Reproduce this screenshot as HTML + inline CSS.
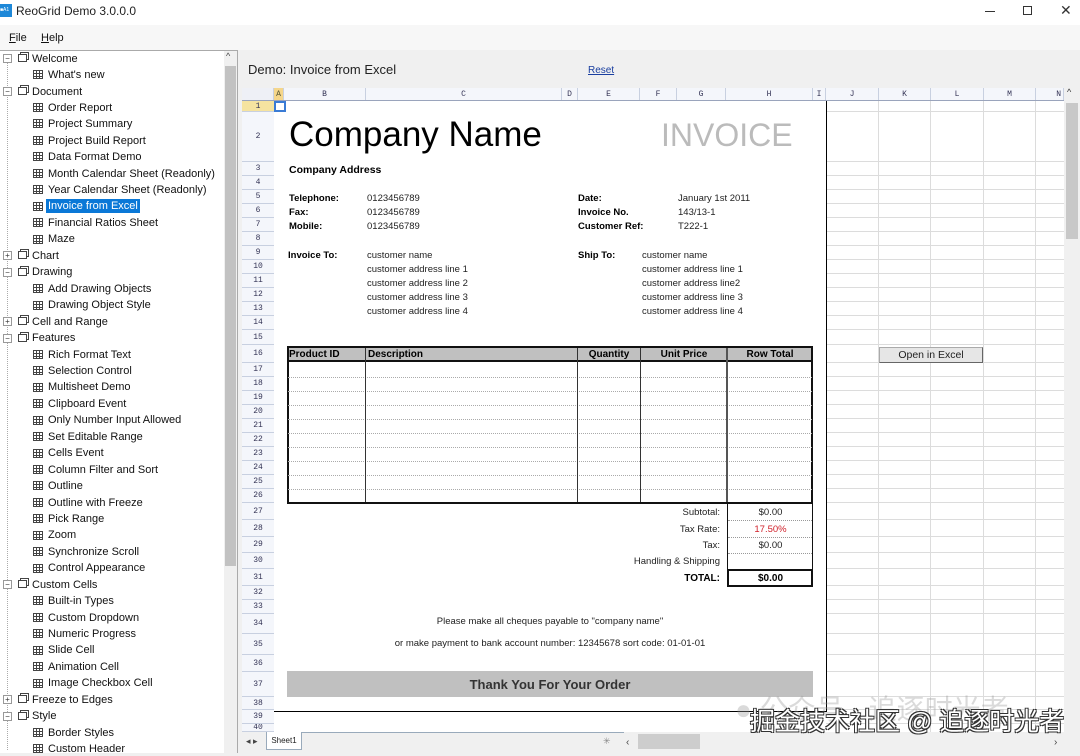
<!DOCTYPE html>
<html><head><meta charset="utf-8">
<style>
*{margin:0;padding:0;box-sizing:border-box}
body{width:1080px;height:753px;overflow:hidden;background:#f0f0f0;font-family:"Liberation Sans","Noto Sans CJK SC",sans-serif;position:relative}
.a{position:absolute;white-space:nowrap}
.tree .a{font-size:11px;color:#111;line-height:14px}
.gi{position:absolute;width:10px;height:9px;border:1px solid #444;background:
linear-gradient(#444,#444) 0 2px/100% 1px no-repeat,
linear-gradient(#444,#444) 0 5px/100% 1px no-repeat,
linear-gradient(#444,#444) 2px 0/1px 100% no-repeat,
linear-gradient(#444,#444) 5px 0/1px 100% no-repeat,#fff}
.fi{position:absolute;width:9px;height:8px;border:1px solid #444;background:#fff;box-shadow:2px -2px 0 -1px #fff,2px -2px 0 0 #444}
.ex{position:absolute;width:9px;height:9px;border:1px solid #999;background:#fff;font-size:8px;line-height:7px;text-align:center;color:#333}
.rh{position:absolute;left:242px;width:32px;font-size:8px;color:#335;text-align:center;border-bottom:1px solid #c8d0e0;background:#f4f6fb;font-family:"Liberation Mono",monospace}
.ch{position:absolute;top:88px;height:13px;font-size:8px;color:#335;text-align:center;line-height:13px;border-right:1px solid #c8d0e0;background:#f4f6fb;font-family:"Liberation Mono",monospace}
.hl{position:absolute;left:826px;width:238px;height:1px;background:#dcdcdc}
.vl{position:absolute;top:101px;height:631px;width:1px;background:#dcdcdc}
.t{position:absolute;font-size:9.5px;color:#222;white-space:nowrap;line-height:12px}
.b{font-weight:bold;color:#000}
.dl{position:absolute;left:288px;width:524px;height:0;border-top:1px dotted #aaa}
</style></head><body>
<div class="a" style="left:0;top:0;width:1080px;height:25px;background:#fff"></div>
<div class="a" style="left:0;top:4px;width:12px;height:13px;background:#1e88d8;color:#fff;font-size:5px;line-height:13px">■A1</div>
<div class="a" style="left:16px;top:4px;font-size:12px;color:#222">ReoGrid Demo 3.0.0.0</div>
<div class="a" style="left:985px;top:11px;width:10px;height:1px;background:#333"></div>
<div class="a" style="left:1023px;top:6px;width:9px;height:9px;border:1px solid #333"></div>
<div class="a" style="left:1060px;top:2px;font-size:14px;color:#333">✕</div>
<div class="a" style="left:0;top:25px;width:1080px;height:25px;background:#f7f7f7"></div>
<div class="a" style="left:9px;top:32px;font-size:11px;color:#111"><u>F</u>ile</div>
<div class="a" style="left:41px;top:32px;font-size:11px;color:#111"><u>H</u>elp</div>
<div class="a" style="left:0;top:50px;width:238px;height:703px;background:#fff;border-top:1px solid #aaa;border-right:1px solid #aaa"></div>
<div class="a" style="left:224px;top:51px;width:13px;height:702px;background:#f0f0f0"></div>
<div class="a" style="left:225px;top:66px;width:11px;height:500px;background:#c2c2c2"></div>
<div class="a" style="left:226px;top:51px;font-size:9px;color:#444">^</div>
<div class="a" style="left:7px;top:60px;width:0;height:690px;border-left:1px dotted #aaa"></div>
<div class="tree">
<div class="ex" style="left:3px;top:54px">−</div><div class="fi" style="left:18px;top:54px"></div><div class="a" style="left:32px;top:52px">Welcome</div>
<div class="gi" style="left:33px;top:70px"></div><div class="a" style="left:48px;top:68px">What's new</div>
<div class="ex" style="left:3px;top:87px">−</div><div class="fi" style="left:18px;top:87px"></div><div class="a" style="left:32px;top:85px">Document</div>
<div class="gi" style="left:33px;top:103px"></div><div class="a" style="left:48px;top:101px">Order Report</div>
<div class="gi" style="left:33px;top:119px"></div><div class="a" style="left:48px;top:117px">Project Summary</div>
<div class="gi" style="left:33px;top:136px"></div><div class="a" style="left:48px;top:134px">Project Build Report</div>
<div class="gi" style="left:33px;top:152px"></div><div class="a" style="left:48px;top:150px">Data Format Demo</div>
<div class="gi" style="left:33px;top:169px"></div><div class="a" style="left:48px;top:167px">Month Calendar Sheet (Readonly)</div>
<div class="gi" style="left:33px;top:185px"></div><div class="a" style="left:48px;top:183px">Year Calendar Sheet (Readonly)</div>
<div class="gi" style="left:33px;top:202px"></div><div class="a" style="left:46px;top:199px;background:#0a78d7;color:#fff;padding:0 2px">Invoice from Excel</div>
<div class="gi" style="left:33px;top:218px"></div><div class="a" style="left:48px;top:216px">Financial Ratios Sheet</div>
<div class="gi" style="left:33px;top:235px"></div><div class="a" style="left:48px;top:232px">Maze</div>
<div class="ex" style="left:3px;top:251px">+</div><div class="fi" style="left:18px;top:251px"></div><div class="a" style="left:32px;top:249px">Chart</div>
<div class="ex" style="left:3px;top:268px">−</div><div class="fi" style="left:18px;top:268px"></div><div class="a" style="left:32px;top:265px">Drawing</div>
<div class="gi" style="left:33px;top:284px"></div><div class="a" style="left:48px;top:282px">Add Drawing Objects</div>
<div class="gi" style="left:33px;top:301px"></div><div class="a" style="left:48px;top:298px">Drawing Object Style</div>
<div class="ex" style="left:3px;top:317px">+</div><div class="fi" style="left:18px;top:317px"></div><div class="a" style="left:32px;top:315px">Cell and Range</div>
<div class="ex" style="left:3px;top:334px">−</div><div class="fi" style="left:18px;top:334px"></div><div class="a" style="left:32px;top:331px">Features</div>
<div class="gi" style="left:33px;top:350px"></div><div class="a" style="left:48px;top:348px">Rich Format Text</div>
<div class="gi" style="left:33px;top:366px"></div><div class="a" style="left:48px;top:364px">Selection Control</div>
<div class="gi" style="left:33px;top:383px"></div><div class="a" style="left:48px;top:380px">Multisheet Demo</div>
<div class="gi" style="left:33px;top:399px"></div><div class="a" style="left:48px;top:397px">Clipboard Event</div>
<div class="gi" style="left:33px;top:416px"></div><div class="a" style="left:48px;top:413px">Only Number Input Allowed</div>
<div class="gi" style="left:33px;top:432px"></div><div class="a" style="left:48px;top:430px">Set Editable Range</div>
<div class="gi" style="left:33px;top:449px"></div><div class="a" style="left:48px;top:446px">Cells Event</div>
<div class="gi" style="left:33px;top:465px"></div><div class="a" style="left:48px;top:463px">Column Filter and Sort</div>
<div class="gi" style="left:33px;top:481px"></div><div class="a" style="left:48px;top:479px">Outline</div>
<div class="gi" style="left:33px;top:498px"></div><div class="a" style="left:48px;top:496px">Outline with Freeze</div>
<div class="gi" style="left:33px;top:514px"></div><div class="a" style="left:48px;top:512px">Pick Range</div>
<div class="gi" style="left:33px;top:531px"></div><div class="a" style="left:48px;top:528px">Zoom</div>
<div class="gi" style="left:33px;top:547px"></div><div class="a" style="left:48px;top:545px">Synchronize Scroll</div>
<div class="gi" style="left:33px;top:564px"></div><div class="a" style="left:48px;top:561px">Control Appearance</div>
<div class="ex" style="left:3px;top:580px">−</div><div class="fi" style="left:18px;top:580px"></div><div class="a" style="left:32px;top:578px">Custom Cells</div>
<div class="gi" style="left:33px;top:596px"></div><div class="a" style="left:48px;top:594px">Built-in Types</div>
<div class="gi" style="left:33px;top:613px"></div><div class="a" style="left:48px;top:611px">Custom Dropdown</div>
<div class="gi" style="left:33px;top:629px"></div><div class="a" style="left:48px;top:627px">Numeric Progress</div>
<div class="gi" style="left:33px;top:646px"></div><div class="a" style="left:48px;top:643px">Slide Cell</div>
<div class="gi" style="left:33px;top:662px"></div><div class="a" style="left:48px;top:660px">Animation Cell</div>
<div class="gi" style="left:33px;top:679px"></div><div class="a" style="left:48px;top:676px">Image Checkbox Cell</div>
<div class="ex" style="left:3px;top:695px">+</div><div class="fi" style="left:18px;top:695px"></div><div class="a" style="left:32px;top:693px">Freeze to Edges</div>
<div class="ex" style="left:3px;top:712px">−</div><div class="fi" style="left:18px;top:712px"></div><div class="a" style="left:32px;top:709px">Style</div>
<div class="gi" style="left:33px;top:728px"></div><div class="a" style="left:48px;top:726px">Border Styles</div>
<div class="gi" style="left:33px;top:744px"></div><div class="a" style="left:48px;top:742px">Custom Header</div>
</div>
<div class="a" style="left:248px;top:62px;font-size:13px;color:#222">Demo: Invoice from Excel</div>
<div class="a" style="left:588px;top:65px;font-size:10px;color:#1a3fa0;text-decoration:underline">Reset</div>
<div class="a" style="left:242px;top:88px;width:822px;height:644px;background:#fff"></div>
<div class="a" style="left:242px;top:88px;width:32px;height:13px;background:#eef0f6;border-right:1px solid #c8d0e0"></div>
<div class="ch" style="left:274px;width:10px;background:#f5d68a;color:#553">A</div>
<div class="ch" style="left:284px;width:82px">B</div>
<div class="ch" style="left:366px;width:196px">C</div>
<div class="ch" style="left:562px;width:16px">D</div>
<div class="ch" style="left:578px;width:62px">E</div>
<div class="ch" style="left:640px;width:37px">F</div>
<div class="ch" style="left:677px;width:49px">G</div>
<div class="ch" style="left:726px;width:87px">H</div>
<div class="ch" style="left:813px;width:13px">I</div>
<div class="ch" style="left:826px;width:53px">J</div>
<div class="ch" style="left:879px;width:52px">K</div>
<div class="ch" style="left:931px;width:53px">L</div>
<div class="ch" style="left:984px;width:52px">M</div>
<div class="ch" style="left:1036px;width:28px;text-align:right;padding-right:2px">N</div>
<div class="a" style="left:242px;top:100px;width:822px;height:1px;background:#9aa4bc"></div>
<div class="a" style="left:273px;top:101px;width:1px;height:631px;background:#9aa4bc"></div>
<div class="rh" style="top:101px;height:11px;line-height:11px;background:#f5e3a0">1</div>
<div class="rh" style="top:112px;height:50px;line-height:50px">2</div>
<div class="rh" style="top:162px;height:14px;line-height:14px">3</div>
<div class="rh" style="top:176px;height:14px;line-height:14px">4</div>
<div class="rh" style="top:190px;height:14px;line-height:14px">5</div>
<div class="rh" style="top:204px;height:14px;line-height:14px">6</div>
<div class="rh" style="top:218px;height:14px;line-height:14px">7</div>
<div class="rh" style="top:232px;height:14px;line-height:14px">8</div>
<div class="rh" style="top:246px;height:14px;line-height:14px">9</div>
<div class="rh" style="top:260px;height:14px;line-height:14px">10</div>
<div class="rh" style="top:274px;height:14px;line-height:14px">11</div>
<div class="rh" style="top:288px;height:14px;line-height:14px">12</div>
<div class="rh" style="top:302px;height:14px;line-height:14px">13</div>
<div class="rh" style="top:316px;height:14px;line-height:14px">14</div>
<div class="rh" style="top:330px;height:15px;line-height:15px">15</div>
<div class="rh" style="top:345px;height:18px;line-height:18px">16</div>
<div class="rh" style="top:363px;height:14px;line-height:14px">17</div>
<div class="rh" style="top:377px;height:14px;line-height:14px">18</div>
<div class="rh" style="top:391px;height:14px;line-height:14px">19</div>
<div class="rh" style="top:405px;height:14px;line-height:14px">20</div>
<div class="rh" style="top:419px;height:14px;line-height:14px">21</div>
<div class="rh" style="top:433px;height:14px;line-height:14px">22</div>
<div class="rh" style="top:447px;height:14px;line-height:14px">23</div>
<div class="rh" style="top:461px;height:14px;line-height:14px">24</div>
<div class="rh" style="top:475px;height:14px;line-height:14px">25</div>
<div class="rh" style="top:489px;height:14px;line-height:14px">26</div>
<div class="rh" style="top:503px;height:17px;line-height:17px">27</div>
<div class="rh" style="top:520px;height:17px;line-height:17px">28</div>
<div class="rh" style="top:537px;height:16px;line-height:16px">29</div>
<div class="rh" style="top:553px;height:16px;line-height:16px">30</div>
<div class="rh" style="top:569px;height:17px;line-height:17px">31</div>
<div class="rh" style="top:586px;height:14px;line-height:14px">32</div>
<div class="rh" style="top:600px;height:14px;line-height:14px">33</div>
<div class="rh" style="top:614px;height:20px;line-height:20px">34</div>
<div class="rh" style="top:634px;height:21px;line-height:21px">35</div>
<div class="rh" style="top:655px;height:17px;line-height:17px">36</div>
<div class="rh" style="top:672px;height:25px;line-height:25px">37</div>
<div class="rh" style="top:697px;height:13px;line-height:13px">38</div>
<div class="rh" style="top:710px;height:14px;line-height:14px">39</div>
<div class="rh" style="top:724px;height:8px;line-height:8px;overflow:hidden">40</div>
<div class="vl" style="left:878px"></div><div class="vl" style="left:930px"></div><div class="vl" style="left:983px"></div><div class="vl" style="left:1035px"></div>
<div class="hl" style="top:111px"></div><div class="hl" style="top:161px"></div><div class="hl" style="top:175px"></div><div class="hl" style="top:189px"></div><div class="hl" style="top:203px"></div><div class="hl" style="top:217px"></div><div class="hl" style="top:231px"></div><div class="hl" style="top:245px"></div><div class="hl" style="top:259px"></div><div class="hl" style="top:273px"></div><div class="hl" style="top:287px"></div><div class="hl" style="top:301px"></div><div class="hl" style="top:315px"></div><div class="hl" style="top:329px"></div><div class="hl" style="top:344px"></div><div class="hl" style="top:362px"></div><div class="hl" style="top:376px"></div><div class="hl" style="top:390px"></div><div class="hl" style="top:404px"></div><div class="hl" style="top:418px"></div><div class="hl" style="top:432px"></div><div class="hl" style="top:446px"></div><div class="hl" style="top:460px"></div><div class="hl" style="top:474px"></div><div class="hl" style="top:488px"></div><div class="hl" style="top:502px"></div><div class="hl" style="top:519px"></div><div class="hl" style="top:536px"></div><div class="hl" style="top:552px"></div><div class="hl" style="top:568px"></div><div class="hl" style="top:585px"></div><div class="hl" style="top:599px"></div><div class="hl" style="top:613px"></div><div class="hl" style="top:633px"></div><div class="hl" style="top:654px"></div><div class="hl" style="top:671px"></div><div class="hl" style="top:696px"></div><div class="hl" style="top:709px"></div><div class="hl" style="top:723px"></div>
<div class="a" style="left:1064px;top:88px;width:16px;height:644px;background:#f0f0f0"></div>
<div class="a" style="left:1066px;top:103px;width:12px;height:136px;background:#c8c8c8"></div>
<div class="a" style="left:1067px;top:87px;font-size:9px;color:#333">^</div>
<div class="a" style="left:274px;top:101px;width:553px;height:611px;border:1px solid #000;border-top:none;border-left:none"></div>
<div class="a" style="left:274px;top:101px;width:12px;height:11px;border:2px solid #3a7bd5"></div>
<div class="a" style="left:289px;top:115px;font-size:35px;color:#000">Company Name</div>
<div class="a" style="left:661px;top:117px;font-size:32px;color:#bbb">INVOICE</div>
<div class="t b" style="left:289px;top:164px;font-size:10.5px">Company Address</div>
<div class="t b" style="left:289px;top:193px">Telephone:</div><div class="t" style="left:367px;top:193px">0123456789</div>
<div class="t b" style="left:289px;top:207px">Fax:</div><div class="t" style="left:367px;top:207px">0123456789</div>
<div class="t b" style="left:289px;top:221px">Mobile:</div><div class="t" style="left:367px;top:221px">0123456789</div>
<div class="t b" style="left:578px;top:193px">Date:</div><div class="t" style="left:678px;top:193px">January 1st 2011</div>
<div class="t b" style="left:578px;top:207px">Invoice No.</div><div class="t" style="left:678px;top:207px">143/13-1</div>
<div class="t b" style="left:578px;top:221px">Customer Ref:</div><div class="t" style="left:678px;top:221px">T222-1</div>
<div class="t b" style="left:288px;top:250px">Invoice To:</div>
<div class="t" style="left:367px;top:250px">customer name</div>
<div class="t" style="left:367px;top:264px">customer address line 1</div>
<div class="t" style="left:367px;top:278px">customer address line 2</div>
<div class="t" style="left:367px;top:292px">customer address line 3</div>
<div class="t" style="left:367px;top:306px">customer address line 4</div>
<div class="t b" style="left:578px;top:250px">Ship To:</div>
<div class="t" style="left:642px;top:250px">customer name</div>
<div class="t" style="left:642px;top:264px">customer address line 1</div>
<div class="t" style="left:642px;top:278px">customer address line2</div>
<div class="t" style="left:642px;top:292px">customer address line 3</div>
<div class="t" style="left:642px;top:306px">customer address line 4</div>
<div class="a" style="left:287px;top:346px;width:526px;height:158px;border:2px solid #111"></div>
<div class="a" style="left:289px;top:348px;width:522px;height:14px;background:#c0c0c0;border-bottom:2px solid #111"></div>
<div class="dl" style="top:377px"></div><div class="dl" style="top:391px"></div><div class="dl" style="top:405px"></div><div class="dl" style="top:419px"></div><div class="dl" style="top:433px"></div><div class="dl" style="top:447px"></div><div class="dl" style="top:461px"></div><div class="dl" style="top:475px"></div><div class="dl" style="top:489px"></div>
<div class="a" style="left:365px;top:348px;width:1px;height:154px;background:#333"></div>
<div class="a" style="left:577px;top:348px;width:1px;height:154px;background:#333"></div>
<div class="a" style="left:640px;top:348px;width:1px;height:154px;background:#333"></div>
<div class="a" style="left:726px;top:348px;width:2px;height:154px;background:#555"></div>
<div class="t b" style="left:289px;top:349px;font-size:10px">Product ID</div>
<div class="t b" style="left:368px;top:349px;font-size:10px">Description</div>
<div class="t b" style="left:578px;top:349px;width:62px;text-align:center;font-size:10px">Quantity</div>
<div class="t b" style="left:641px;top:349px;width:86px;text-align:center;font-size:10px">Unit Price</div>
<div class="t b" style="left:727px;top:349px;width:86px;text-align:center;font-size:10px">Row Total</div>
<div class="a" style="left:727px;top:503px;width:1px;height:67px;background:#111"></div>
<div class="a" style="left:812px;top:503px;width:1px;height:67px;background:#111"></div>
<div class="a" style="left:728px;top:520px;width:84px;border-top:1px dotted #999"></div>
<div class="a" style="left:728px;top:537px;width:84px;border-top:1px dotted #999"></div>
<div class="a" style="left:728px;top:553px;width:84px;border-top:1px dotted #999"></div>
<div class="a" style="left:727px;top:569px;width:86px;height:18px;border:2px solid #111"></div>
<div class="t" style="left:600px;top:507px;width:120px;text-align:right">Subtotal:</div>
<div class="t" style="left:600px;top:524px;width:120px;text-align:right">Tax Rate:</div>
<div class="t" style="left:600px;top:540px;width:120px;text-align:right">Tax:</div>
<div class="t" style="left:600px;top:556px;width:120px;text-align:right">Handling &amp; Shipping</div>
<div class="t b" style="left:600px;top:573px;width:120px;text-align:right;font-size:10px">TOTAL:</div>
<div class="t" style="left:728px;top:507px;width:85px;text-align:center">$0.00</div>
<div class="t" style="left:728px;top:524px;width:85px;text-align:center;color:#d0202a">17.50%</div>
<div class="t" style="left:728px;top:540px;width:85px;text-align:center">$0.00</div>
<div class="t b" style="left:728px;top:573px;width:85px;text-align:center;font-size:10px">$0.00</div>
<div class="t" style="left:287px;top:616px;width:526px;text-align:center">Please make all cheques payable to "company name"</div>
<div class="t" style="left:287px;top:638px;width:526px;text-align:center">or make payment to bank account number: 12345678 sort code: 01-01-01</div>
<div class="a" style="left:287px;top:671px;width:526px;height:26px;background:#c0c0c0;color:#333;font-size:13px;font-weight:bold;text-align:center;line-height:27px">Thank You For Your Order</div>
<div class="a" style="left:879px;top:347px;width:104px;height:16px;background:#e6e6e6;border:1px solid #aaa;border-right-color:#666;border-bottom-color:#666;font-size:10.5px;color:#222;text-align:center;line-height:14px">Open in Excel</div>
<div class="a" style="left:238px;top:732px;width:842px;height:21px;background:#f0f0f0"></div>
<div class="a" style="left:246px;top:736px;font-size:9px;color:#444">◂ ▸</div>
<div class="a" style="left:266px;top:732px;width:358px;height:1px;background:#9ab"></div>
<div class="a" style="left:266px;top:732px;width:36px;height:18px;background:#fff;border:1px solid #9ab;border-top:none;font-size:8px;line-height:17px;text-align:center;color:#222">Sheet1</div>
<div class="a" style="left:603px;top:736px;font-size:9px;color:#888">✳</div>
<div class="a" style="left:626px;top:737px;font-size:10px;color:#444">‹</div>
<div class="a" style="left:638px;top:734px;width:62px;height:15px;background:#cdcdcd"></div>
<div class="a" style="left:1054px;top:737px;font-size:10px;color:#444">›</div>
<div class="a" style="left:735px;top:688px;font-size:28px;color:rgba(150,150,150,0.35)">● 公众号 · 追逐时光者</div>
<div class="a" style="left:750px;top:702px;font-size:25px;color:#fff;text-shadow:1px 1px 0 #333,-1px -1px 0 #333,1px -1px 0 #333,-1px 1px 0 #333">掘金技术社区 @ 追逐时光者</div>
</body></html>
